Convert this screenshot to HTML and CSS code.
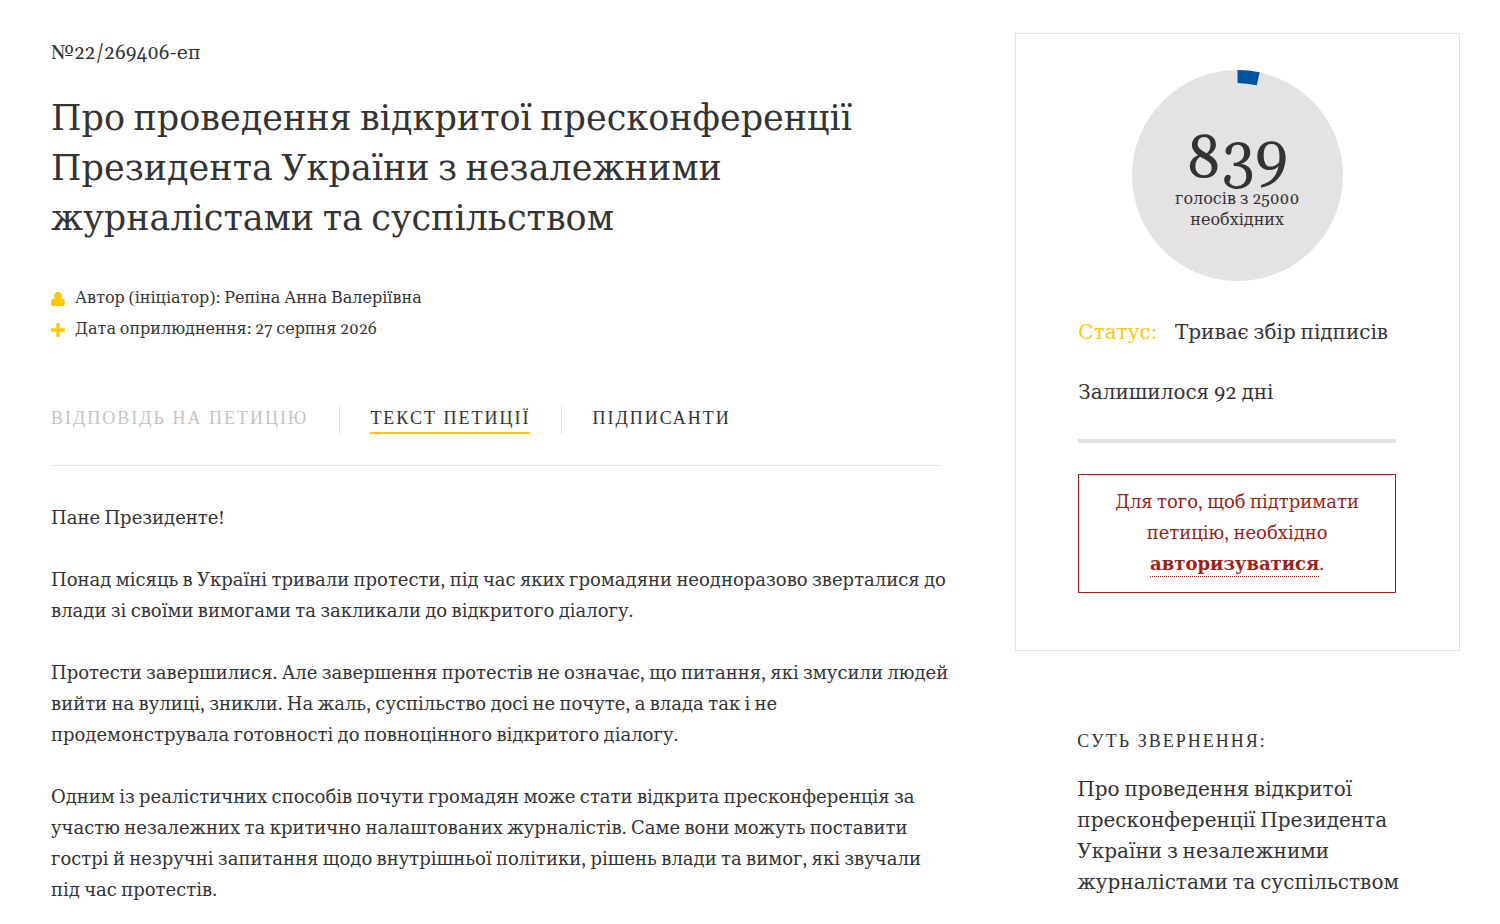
FILE: index.html
```html
<!DOCTYPE html>
<html lang="uk">
<head>
<meta charset="utf-8">
<title>Петиція №22/269406-еп</title>
<link rel="stylesheet" href="styles.css">
</head>
<body>
<div class="page">
  <main class="main">
    <div class="number">№22/269406-еп</div>
    <h1 class="title">Про проведення відкритої пресконференції<br>Президента України з незалежними<br>журналістами та суспільством</h1>
    <div class="meta">
      <div class="meta-row">
        <svg class="icon" viewBox="0 0 14 14" aria-hidden="true"><rect x="3.200" y="0" width="7.600" height="8.500" rx="3.600"/><path d="M3.200 6.200C1 6.400 0 8.200 0 11.300 0 13.200.8 14 2.300 14h9.400c1.500 0 2.300-.8 2.300-2.700 0-3.100-1-4.900-3.200-5.100L9.500 8h-5z"/></svg>
        <span>Автор (ініціатор): Репіна Анна Валеріївна</span>
      </div>
      <div class="meta-row">
        <svg class="icon" viewBox="0 0 14 14" aria-hidden="true"><path d="M5.300 1q0-1 1-1h1.400q1 0 1 1v4.300H13q1 0 1 1v1.400q0 1-1 1H8.700V13q0 1-1 1H6.300q-1 0-1-1V8.700H1q-1 0-1-1V6.300q0-1 1-1h4.300z"/></svg>
        <span>Дата оприлюднення: 27 серпня 2026</span>
      </div>
    </div>
    <nav class="tabs">
      <div class="tab"><span class="tab-off">Відповідь на петицію</span></div>
      <div class="tab"><a class="tab-link tab-active" href="#text">Текст петиції</a></div>
      <div class="tab"><a class="tab-link" href="#signers">Підписанти</a></div>
    </nav>
    <article class="text" id="text">
      <p>Пане Президенте!</p>
      <p>Понад місяць в Україні тривали протести, під час яких громадяни неодноразово зверталися до<br>влади зі своїми вимогами та закликали до відкритого діалогу.</p>
      <p>Протести завершилися. Але завершення протестів не означає, що питання, які змусили людей<br>вийти на вулиці, зникли. На жаль, суспільство досі не почуте, а влада так і не<br>продемонструвала готовності до повноцінного відкритого діалогу.</p>
      <p>Одним із реалістичних способів почути громадян може стати відкрита пресконференція за<br>участю незалежних та критично налаштованих журналістів. Саме вони можуть поставити<br>гострі й незручні запитання щодо внутрішньої політики, рішень влади та вимог, які звучали<br>під час протестів.</p>
    </article>
  </main>
  <aside class="side">
    <section class="card">
      <div class="votes">
        <svg class="ring" viewBox="0 0 210 210" aria-hidden="true"><circle cx="105" cy="105" r="105" fill="#e4e2e3"/><path d="M105 0A105 105 0 0 1 127 2.300L124.200 15.300A92 92 0 0 0 105 13z" fill="#00539f"/></svg>
        <div class="votes-text">
          <div class="count">839</div>
          <div class="needed">голосів з 25000<br>необхідних</div>
        </div>
      </div>
      <div class="status"><span class="status-label">Статус:</span><span>Триває збір підписів</span></div>
      <div class="days">Залишилося 92 дні</div>
      <div class="notice">Для того, щоб підтримати<br>петицію, необхідно<br><a class="login" href="#login">авторизуватися</a>.</div>
    </section>
    <section class="summary">
      <h2 class="summary-title">Суть звернення:</h2>
      <p class="summary-text">Про проведення відкритої<br>пресконференції Президента<br>України з незалежними<br>журналістами та суспільством</p>
    </section>
  </aside>
</div>
</body>
</html>
```
FILE: styles.css
```css
* { box-sizing: border-box; }
body {
  margin: 0;
  background: #fff;
  color: #333;
  font-family: Georgia, Gelasio, "DejaVu Serif", "Liberation Serif", serif;
  font-size: 18px;
  line-height: 31px;
}
p, h1, h2 { margin: 0; font-weight: 400; }
.page {
  display: grid;
  grid-template-columns: minmax(0, 2fr) minmax(0, 1fr);
  column-gap: 75px;
  padding: 33px 40px 0 51px;
}
.main, .side { white-space: nowrap; }
.main { padding-top: 5px; }
.number { font-size: 19px; }
.title { margin-top: 26px; font-size: 35px; line-height: 50px; }
.meta { margin-top: 38px; font-size: 16px; }
.meta-row { display: flex; align-items: center; gap: 10px; }
.icon { width: 14px; height: 14px; fill: #fdc60b; }
.tabs {
  display: flex;
  margin-top: 60px;
  padding-bottom: 31px;
  border-bottom: 1px solid #e4e2e3;
  font-family: "Liberation Serif", serif;
  font-size: 18px;
  text-transform: uppercase;
  letter-spacing: 2px;
  line-height: 27px;
}
.tab + .tab { margin-left: 31px; padding-left: 30px; border-left: 1px solid #e4e2e3; }
.tab-off { color: #c4c4c4; }
.tab-link { color: #333; text-decoration: none; }
.tab-active { display: block; border-bottom: 2px solid #fdc60b; }
.text { margin-top: 37px; }
.text p + p { margin-top: 31px; }
.card { padding: 36px 63px 57px 62px; border: 1px solid #e4e2e3; }
.votes { display: grid; justify-items: center; }
.votes > * { grid-area: 1 / 1; }
.ring { width: 211px; height: 211px; }
.votes-text { padding-top: 60px; text-align: center; }
.count { font-size: 60px; line-height: 59px; }
.needed { font-size: 16px; line-height: 21px; }
.status { display: flex; gap: 18px; margin-top: 37px; font-size: 20px; }
.status-label { color: #fdc60b; }
.days { margin-top: 29px; padding-bottom: 30px; border-bottom: 4px solid #e4e2e3; font-size: 20px; }
.notice { margin-top: 31px; padding: 12px 10px; border: 1px solid #9c2218; color: #9c2218; text-align: center; }
.login { color: inherit; font-weight: 700; text-decoration: none; border-bottom: 1px dotted #9c2218; }
.summary { padding: 75px 0 20px 62px; }
.summary-title { font-family: "Liberation Serif", serif; font-size: 18px; letter-spacing: 2px; text-transform: uppercase; }
.summary-text { margin-top: 18px; font-size: 20px; }
```
